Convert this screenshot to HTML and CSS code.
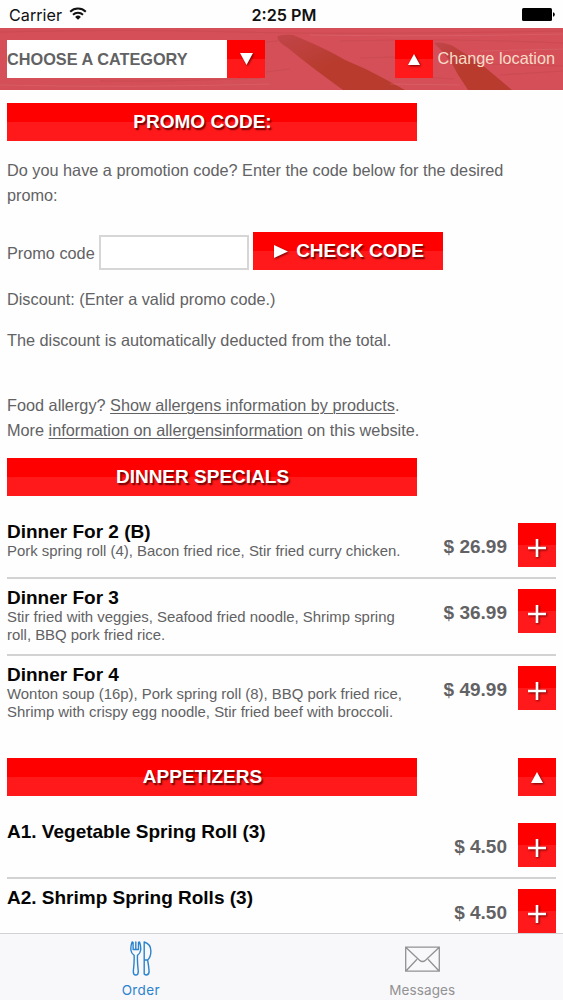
FILE: index.html
```html
<!DOCTYPE html>
<html lang="en">
<head>
<meta charset="utf-8">
<title>Order</title>
<link rel="stylesheet" href="styles.css">
</head>
<body>
<div class="screen">
  <div class="status">
    <div class="carrier"><span>Carrier</span>
      <svg width="18" height="13" viewBox="0 0 18 13" fill="none" stroke="#111" stroke-width="2"><path d="M1.2 4.7a11.2 11.2 0 0 1 15.6 0"/><path d="M4 7.7a7.2 7.2 0 0 1 10 0"/><path d="M9 12.8 6.1 9.9a4.2 4.2 0 0 1 5.8 0z" fill="#111" stroke="none"/></svg>
    </div>
    <div class="clock">2:25 PM</div>
    <svg class="battery" width="33" height="13" viewBox="0 0 33 13"><rect width="30" height="13" rx="1.5"/><path d="M31 4.3q1.8.5 1.8 2.2t-1.8 2.2z"/></svg>
  </div>

  <header class="header">
    <svg class="backdrop" width="563" height="62" viewBox="0 0 563 62">
      <defs><linearGradient id="streak" x1="0" y1="0" x2="1" y2="1"><stop offset="0" stop-color="#c2454a"/><stop offset=".5" stop-color="#b83b2d"/><stop offset="1" stop-color="#b83b2f"/></linearGradient></defs>
      <g fill="url(#streak)"><path d="M277 9q3-3 16-2q34 14 52 25 20 8 38 18l22 12h-62q-36-26-55-42-9-5-11-11z"/><path d="M434 15q8-2 19 3l28 18 31 26h-44l-11-17q-6-14-23-30z"/></g>
      <g fill="none" stroke="#bd4148" stroke-opacity=".35"><path d="M0 4q130-3 240 0t323-1M266 14l35-3M340 13q112-3 223 2M266 44l24-3M360 30l35-1M486 36l77 2M100 53q70 1 160-3M408 48l46 3M500 47l63-4"/></g>
      <g fill="none" stroke="#e0787d" stroke-opacity=".35"><path d="M0 57q130 3 270-1M390 56l70 1M310 7q120 2 253-1M480 23l83-2"/></g>
    </svg>
    <div class="select">CHOOSE A CATEGORY</div>
    <div class="square"><svg width="13" height="12" viewBox="0 0 13 12"><path d="M0 0h13L6.5 12z"/></svg></div>
    <div class="square up"><svg width="12" height="11" viewBox="0 0 12 11"><path d="M6 0l6 11H0z"/></svg></div>
    <div class="location"><span>Change location</span></div>
  </header>

  <main class="content">
    <h2 class="bar"><span>PROMO CODE:</span></h2>
    <p class="intro">Do you have a promotion code? Enter the code below for the desired<br>promo:</p>
    <div class="form">
      <label>Promo code</label><div class="input"></div>
      <div class="check"><svg width="14" height="13" viewBox="0 0 14 13"><path d="M0 0l14 6.5L0 13z"/></svg><span>CHECK CODE</span></div>
    </div>
    <p class="discount">Discount: (Enter a valid promo code.)</p>
    <p class="deducted">The discount is automatically deducted from the total.</p>
    <p class="allergy"><span>Food allergy? <u>Show allergens information by products</u>.</span><br><span>More <u>information on allergensinformation</u> on this website.</span></p>

    <h2 class="bar"><span>DINNER SPECIALS</span></h2>
    <section class="menu">
      <article class="item">
        <div class="text"><h3>Dinner For 2 (B)</h3><p>Pork spring roll (4), Bacon fried rice, Stir fried curry chicken.</p></div>
        <div class="price">$ 26.99</div><div class="add"><svg width="18" height="18" viewBox="0 0 18 18"><path d="M7.7 0h2.600v7.700H18v2.600h-7.700V18H7.700v-7.700H0V7.700h7.700z"/></svg></div>
      </article>
      <article class="item tall">
        <div class="text"><h3>Dinner For 3</h3><p>Stir fried with veggies, Seafood fried noodle, Shrimp spring<br>roll, BBQ pork fried rice.</p></div>
        <div class="price">$ 36.99</div><div class="add"><svg width="18" height="18" viewBox="0 0 18 18"><path d="M7.7 0h2.600v7.700H18v2.600h-7.700V18H7.700v-7.700H0V7.700h7.700z"/></svg></div>
      </article>
      <article class="item last">
        <div class="text"><h3>Dinner For 4</h3><p>Wonton soup (16p), Pork spring roll (8), BBQ pork fried rice,<br>Shrimp with crispy egg noodle, Stir fried beef with broccoli.</p></div>
        <div class="price">$ 49.99</div><div class="add"><svg width="18" height="18" viewBox="0 0 18 18"><path d="M7.7 0h2.600v7.700H18v2.600h-7.700V18H7.700v-7.700H0V7.700h7.700z"/></svg></div>
      </article>
    </section>

    <div class="barrow">
      <h2 class="bar"><span>APPETIZERS</span></h2>
      <div class="square"><svg width="12" height="11" viewBox="0 0 12 11"><path d="M6 0l6 11H0z"/></svg></div>
    </div>
    <section class="menu">
      <article class="item">
        <div class="text"><h3>A1. Vegetable Spring Roll (3)</h3></div>
        <div class="price">$ 4.50</div><div class="add"><svg width="18" height="18" viewBox="0 0 18 18"><path d="M7.7 0h2.600v7.700H18v2.600h-7.700V18H7.700v-7.700H0V7.700h7.700z"/></svg></div>
      </article>
      <article class="item">
        <div class="text"><h3>A2. Shrimp Spring Rolls (3)</h3></div>
        <div class="price">$ 4.50</div><div class="add"><svg width="18" height="18" viewBox="0 0 18 18"><path d="M7.7 0h2.600v7.700H18v2.600h-7.700V18H7.700v-7.700H0V7.700h7.700z"/></svg></div>
      </article>
    </section>
  </main>

  <nav class="tabs">
    <div class="tab active">
      <svg width="22" height="36" viewBox="0 0 22 36" fill="none" stroke="currentColor" stroke-width="1.4" stroke-linejoin="round" stroke-linecap="round"><path d="M2 1.200Q.6 5 .9 9q.4 3.500 3.200 5.300Q4.500 20 3.300 30.500q0 3.500 2.500 3.500t2.500-3.500Q7.100 20 7.500 14.300 10.300 12.500 10.700 9q.3-4-1.100-7.800-.8-.4-1.100.3V8.500H3.100V1.500Q2.800.8 2 1.200zM5.800 1v7.500"/><path d="M14.200 1v32q1 1 2.400 1 2.700-.5 2.500-4-.5-6-1.500-11 3.300-3 3.300-9 0-7-6.700-9zM14.200 19h3.400"/></svg>
      <span>Order</span>
    </div>
    <div class="tab">
      <svg width="35" height="36" viewBox="0 0 35 36" fill="none" stroke="currentColor" stroke-width="1.300"><path d="M.7 6.200h33.600v24H.7zM.7 6.200l13.800 13q3 2.700 6 0l13.800-13M.7 30.200l11.300-12M34.300 30.200 23 18.200"/></svg>
      <span>Messages</span>
    </div>
  </nav>
</div>
</body>
</html>
```
FILE: styles.css
```css
* { box-sizing: border-box; }
body, h2, h3, p { margin: 0; }
body { background: #fefefe; font-family: "Liberation Sans", Arial, sans-serif; color: #626264; white-space: nowrap; }
svg { display: block; flex: none; }
.screen { width: 563px; height: 1000px; overflow: hidden; display: flex; flex-direction: column; }

.status { height: 28px; flex: none; display: grid; grid-template-columns: 1fr auto 1fr; align-items: center; padding: 1px 8px 0 9px; font-family: Inter, sans-serif; color: #111; }
.carrier { display: flex; align-items: center; gap: 7px; font-size: 16.200px; }
.carrier svg { margin-top: -3px; }
.clock { font-size: 16.200px; font-weight: 600; padding-left: 4px; }
.battery { justify-self: end; fill: #000; }

.header { position: relative; height: 62px; flex: none; display: flex; align-items: center; padding: 0 8px 0 7px; background: #d44f57; overflow: hidden; }
.header > * { position: relative; }
.header > .backdrop { position: absolute; left: 0; top: 0; }
.select { width: 220px; height: 38px; line-height: 38px; background: #fff; font-size: 16.300px; font-weight: bold; }
.square, .add, .bar, .check { background: linear-gradient(#fe0000 50%, #ff191b 50%); color: #fff; display: flex; align-items: center; justify-content: center; }
.square { width: 38px; height: 38px; }
.square svg, .check svg, .add svg { fill: #fff; filter: drop-shadow(1.500px 1.500px 1px #700000); }
.square.up { margin-left: auto; }
.location { margin-left: 4px; color: #f7dcc9; font-size: 16.280px; margin-top: -1px; }

.content { flex: 1; min-height: 0; overflow: hidden; padding: 13px 7px 0; font-size: 16.280px; line-height: 24.500px; }
.bar { width: 410px; height: 38px; padding: 1px 19px 0 0; font-size: 19px; text-shadow: 1.500px 1.500px 1.500px #700000; }
.intro { padding-top: 17px; height: 91px; }
.form { display: flex; align-items: center; height: 38px; }
.form label { width: 92px; padding-top: 4px; }
.input { width: 150px; height: 35px; margin-top: 3px; background: #fff; border: 2px solid #d6d6d6; }
.check { width: 190px; height: 38px; margin-left: 4px; padding: 1px 0 0 2px; gap: 8px; font-size: 19px; font-weight: bold; text-shadow: 1.500px 1.500px 1.500px #700000; }
.discount { padding-top: 17px; height: 57px; }
.deducted { padding-top: 1px; height: 66px; }
.allergy { height: 65px; }
u { text-underline-offset: 2px; text-decoration-thickness: 1px; }

.menu { padding-top: 17px; }
.item { display: flex; align-items: flex-start; height: 66px; padding-top: 10px; border-bottom: 2px solid #d2d2d2; }
.item.tall { height: 77px; }
.item.last { height: 102px; border: 0; }
.text { flex: 1; }
.text h3 { margin: -1px 0 1px; font-size: 19px; line-height: 19px; color: #050505; }
.text p { font-size: 14.920px; line-height: 17.500px; }
.price { font-size: 19px; font-weight: bold; margin-right: 11px; padding-top: 12px; }
.add { width: 38px; height: 43.500px; flex: none; padding-top: 7px; }
.barrow { display: flex; justify-content: space-between; width: 549px; }

.tabs { height: 67px; flex: none; display: grid; grid-template-columns: 1fr 1fr; border-top: 1px solid #d2d2d5; background: #f8f7fa; font-family: Inter, sans-serif; }
.tab { display: flex; flex-direction: column; align-items: center; padding-top: 7px; color: #929292; font-size: 13.500px; letter-spacing: .1px; line-height: 18px; gap: 4px; }
.active { color: #2a83cd; letter-spacing: .35px; }
```
